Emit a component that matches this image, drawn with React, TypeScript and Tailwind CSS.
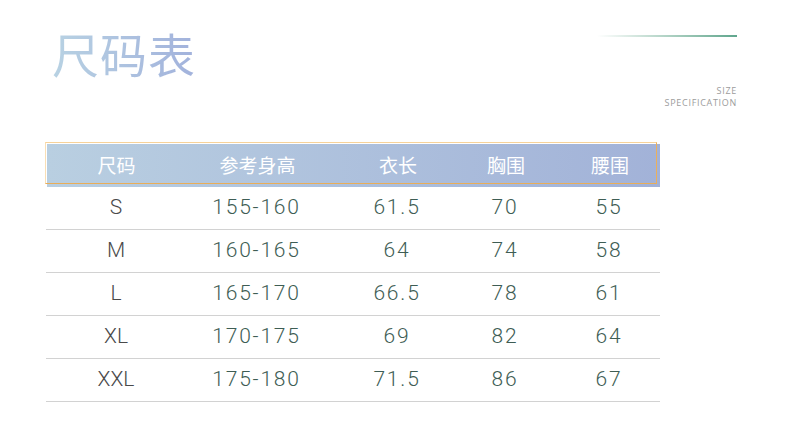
import React from 'react';

const rows = [
  ['S', '155-160', '61.5', '70', '55'],
  ['M', '160-165', '64', '74', '58'],
  ['L', '165-170', '66.5', '78', '61'],
  ['XL', '170-175', '69', '82', '64'],
  ['XXL', '175-180', '71.5', '86', '67'],
];

const headers = ['尺码', '参考身高', '衣长', '胸围', '腰围'];

const cols = 'grid grid-cols-[140px_141px_140px_76px_117px]';

export default function App() {
  return (
    <div className="w-[790px] h-[436px] bg-white overflow-hidden font-['Liberation_Sans','Noto_Sans_CJK_SC',sans-serif]">
      <div className="flex justify-between pl-[52px] pr-[53px]">
        <h1 className="mt-[29px] text-[47px] leading-none tracking-[1px] bg-gradient-to-r from-[#b8d2e3] to-[#a2b2dc] bg-clip-text text-transparent font-['Noto_Sans_CJK_SC',sans-serif]">
          尺码表
        </h1>
        <div className="flex flex-col items-end">
          <div className="mt-[35px] w-[140px] h-[2px] bg-gradient-to-r from-white to-[#5fa68d]" />
          <div className="mt-[48px] text-[9px] leading-[12px] tracking-[0.7px] text-right text-[#9c9c9c] font-['Open_Sans',sans-serif]">
            <div>SIZE</div>
            <div>SPECIFICATION</div>
          </div>
        </div>
      </div>

      <div className="ml-[46px] w-[614px] mt-[35px]">
        <div className="relative ml-[1px] h-[43px] bg-gradient-to-r from-[#b9cfe1] to-[#a2b2d8]">
          <div className="absolute -left-[2px] -top-[2px] right-[3px] bottom-[3px] border border-l-[#f9dfb6] border-t-[#f6d29a] border-r-[#ebb05c] border-b-[#e9ad58]" />
          <div className={`${cols} h-full text-white text-[19px] font-['Noto_Sans_CJK_SC',sans-serif]`}>
            {headers.map((h, i) => (
              <div key={h} className={`flex items-center justify-center ${i === 4 ? 'pl-[15px]' : ''} ${i === 0 ? '-ml-[1px]' : ''}`}>
                {h}
              </div>
            ))}
          </div>
        </div>
        {rows.map((r) => (
          <div key={r[0]} className={`${cols} h-[43px] border-b border-[#d2d2d2]`}>
            {r.map((c, i) => (
              <div
                key={i}
                className={`flex items-center justify-center text-[21px] font-light font-['Roboto',sans-serif] ${
                  i === 0 ? 'text-[#4a4a4a]' : 'text-[#3e5d54] tracking-[1.8px]'
                } ${i === 4 ? 'pl-[15px]' : ''}`}
              >
                {c}
              </div>
            ))}
          </div>
        ))}
      </div>
    </div>
  );
}
